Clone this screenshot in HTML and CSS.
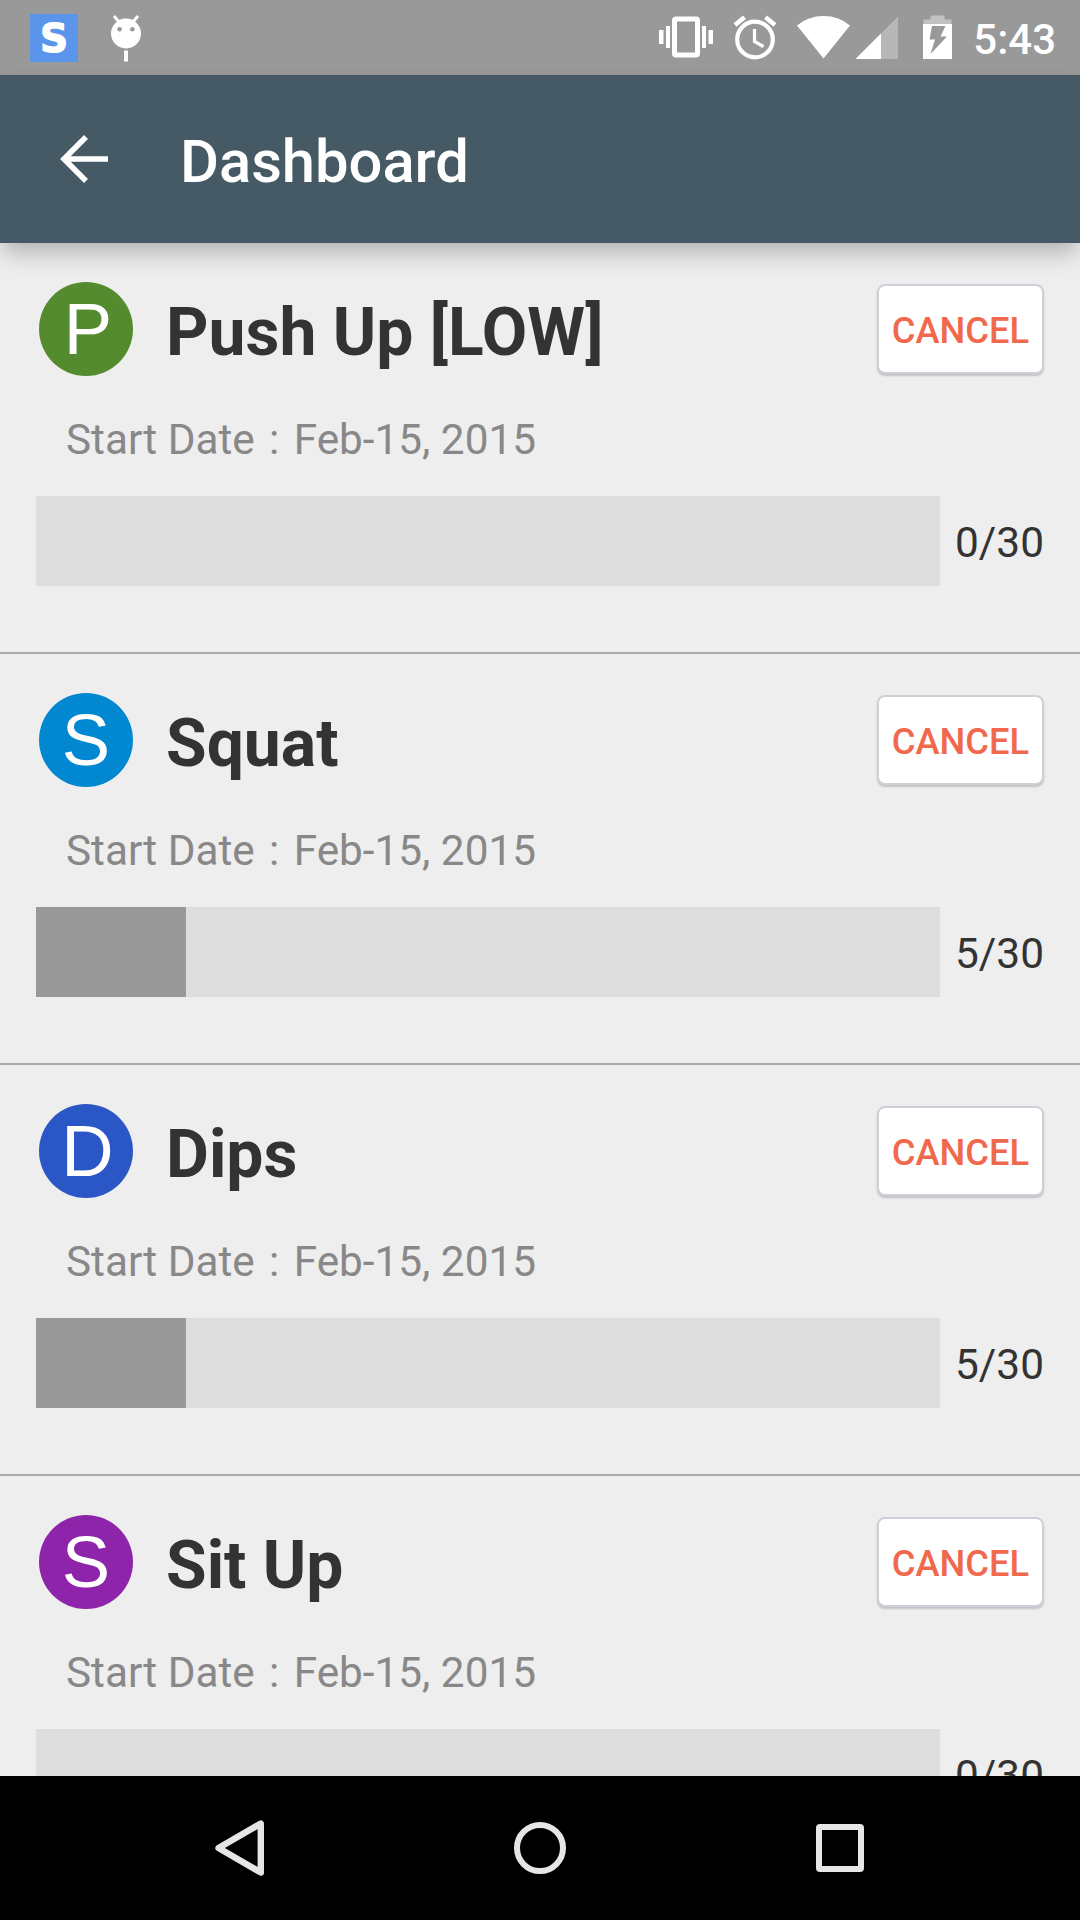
FILE: index.html
```html
<!DOCTYPE html>
<html lang="en">
<head>
<meta charset="utf-8">
<title>Dashboard</title>
<link rel="stylesheet" href="styles.css">
</head>
<body>
<div class="screen">
  <div class="status-bar">
    <div class="notifications">
      <span class="app-badge">S</span>
      <svg class="lollipop" width="32" height="48" viewBox="0 0 32 48" fill="#fff">
        <path d="M4 2l6 7M28 2l-6 7" stroke="#fff" stroke-width="3" fill="none"/>
        <circle cx="16" cy="19.500" r="15"/>
        <circle cx="9.600" cy="15.300" r="2.300" fill="#999"/>
        <circle cx="22.400" cy="15.300" r="2.300" fill="#999"/>
        <path d="M14 36.500h4v11h-4z"/>
      </svg>
    </div>
    <div class="indicators">
      <svg width="421" height="75" viewBox="659 0 421 75" fill="#fff" class="indicator-icons">
        <path d="M659 30h4.500v14H659zM666 26h4v22h-4zM702 26h4v22h-4zM708.500 30h4.500v14h-4.500z"/>
        <path fill-rule="evenodd" d="M676 16.500h20a4 4 0 0 1 4 4v33a4 4 0 0 1-4 4h-20a4 4 0 0 1-4-4v-33a4 4 0 0 1 4-4zM677 21.500v31h18v-31z"/>
        <g fill="none" stroke="#fff">
          <circle cx="755" cy="39.500" r="17.800" stroke-width="4.200"/>
          <path d="M754.500 29v12.500l9 5" stroke-width="3.200"/>
          <path d="M735 25l9.500-7.800M775 25l-9.500-7.800" stroke-width="4.600"/>
        </g>
        <path d="M797 25.500Q808 16 823.500 16T850 25.500L823.500 58.500z"/>
        <path d="M898 16.500V59h-42.500z" opacity=".3"/>
        <path d="M881 33.500V59h-25.500z"/>
        <path d="M930.500 15.500h14v4h7V24h-28v-4.500h7z" opacity=".4"/>
        <path fill-rule="evenodd" d="M923 24h29v35h-29zM932 26l-2.500 13.500h5.500l-4.500 14.500L947 36.500h-6.500l5-10.500z"/>
      </svg>
      <span class="clock">5:43</span>
    </div>
  </div>

  <header class="app-bar">
    <svg class="back" width="48" height="48" viewBox="0 0 48 48" fill="none" stroke="#fff" stroke-width="5.600">
      <path d="M48 24H5M26 2L4 24l22 22"/>
    </svg>
    <h1 class="app-title">Dashboard</h1>
  </header>

  <main class="list">
    <section class="workout">
      <div class="workout-head">
        <span class="avatar green">P</span>
        <h2 class="name">Push Up [LOW]</h2>
        <button class="cancel">CANCEL</button>
      </div>
      <div class="date"><span>Start Date</span><span class="colon">:</span><span>Feb-15, 2015</span></div>
      <div class="progress"><div class="track"></div><span class="count">0/30</span></div>
    </section>
    <section class="workout">
      <div class="workout-head">
        <span class="avatar sky">S</span>
        <h2 class="name">Squat</h2>
        <button class="cancel">CANCEL</button>
      </div>
      <div class="date"><span>Start Date</span><span class="colon">:</span><span>Feb-15, 2015</span></div>
      <div class="progress"><div class="track"><div class="fill" style="width:16.6%"></div></div><span class="count">5/30</span></div>
    </section>
    <section class="workout">
      <div class="workout-head">
        <span class="avatar blue">D</span>
        <h2 class="name">Dips</h2>
        <button class="cancel">CANCEL</button>
      </div>
      <div class="date"><span>Start Date</span><span class="colon">:</span><span>Feb-15, 2015</span></div>
      <div class="progress"><div class="track"><div class="fill" style="width:16.6%"></div></div><span class="count">5/30</span></div>
    </section>
    <section class="workout">
      <div class="workout-head">
        <span class="avatar purple">S</span>
        <h2 class="name">Sit Up</h2>
        <button class="cancel">CANCEL</button>
      </div>
      <div class="date"><span>Start Date</span><span class="colon">:</span><span>Feb-15, 2015</span></div>
      <div class="progress"><div class="track"></div><span class="count">0/30</span></div>
    </section>
  </main>

  <nav class="nav-bar">
    <svg width="300" height="144" viewBox="90 0 300 144"><path d="M260.800 47.500v49L218.500 72z" fill="none" stroke="#e6e6e6" stroke-width="6.400" stroke-linejoin="round"/></svg>
    <svg width="300" height="144" viewBox="390 0 300 144"><circle cx="540" cy="72" r="23" fill="none" stroke="#e6e6e6" stroke-width="6"/></svg>
    <svg width="300" height="144" viewBox="690 0 300 144"><path fill="#e6e6e6" fill-rule="evenodd" d="M820 48h40a4 4 0 0 1 4 4v40a4 4 0 0 1-4 4h-40a4 4 0 0 1-4-4V52a4 4 0 0 1 4-4zM822 54v36h36V54z"/></svg>
  </nav>
</div>
</body>
</html>
```
FILE: styles.css
```css
* { box-sizing: border-box; }
body {
  margin: 0;
  font-family: Roboto, "Liberation Sans", sans-serif;
  background: #eee;
}
h1, h2 { margin: 0; }
svg { display: block; flex: none; }

.screen {
  width: 1080px;
  height: 1920px;
  display: flex;
  flex-direction: column;
  overflow: hidden;
}

.status-bar {
  flex: none;
  height: 75px;
  display: flex;
  justify-content: space-between;
  background: #999;
  color: #fff;
}
.notifications {
  display: flex;
  gap: 32px;
  padding: 14px 0 0 30px;
}
.app-badge {
  width: 48px;
  height: 48px;
  background: #5a95eb;
  font: bold 39px/49px "DejaVu Sans", sans-serif;
  -webkit-text-stroke: 1.2px #fff;
  text-align: center;
}
.indicators { display: grid; }
.indicator-icons, .clock { grid-area: 1 / 1; }
.clock {
  justify-self: end;
  padding-right: 24px;
  font-size: 42px;
  font-weight: 500;
  line-height: 79px;
}

.app-bar {
  flex: none;
  height: 168px;
  display: flex;
  align-items: center;
  gap: 72px;
  padding-left: 60px;
  background: #455a64;
  color: #fff;
  position: relative;
  z-index: 1;
  box-shadow: 0 13px 22px -3px rgba(0, 0, 0, .25);
}
.app-title {
  padding-top: 5px;
  font-size: 59.7px;
  font-weight: 500;
}

.list {
  flex: 1;
  min-height: 0;
  overflow: hidden;
}
.workout {
  height: 411px;
  padding: 39px 36px 0;
  border-bottom: 2px solid #aaa;
}
.workout-head {
  display: flex;
  align-items: center;
  height: 94px;
  padding-left: 3px;
}
.avatar {
  width: 94px;
  height: 94px;
  border-radius: 50%;
  color: #fff;
  font-family: "Liberation Sans", Arial, sans-serif;
  font-size: 72.5px;
  line-height: 94px;
  text-align: center;
}
.green { background: #558b2f; padding-left: 4px; }
.sky { background: #0288d1; }
.blue { background: #2a56c6; padding-left: 3px; }
.purple { background: #8e24aa; }
.name {
  flex: 1;
  padding: 7px 0 0 33px;
  color: #333;
  font-size: 66px;
  font-weight: 700;
}
.cancel {
  width: 167px;
  height: 90px;
  padding: 5px 0 0;
  border: 2px solid #cdd0d8;
  border-radius: 8px;
  background: #fff;
  box-shadow: 0 2px 2px rgba(0, 0, 0, .18);
  color: #f0694d;
  font: 500 36.3px/1 Roboto, sans-serif;
}
.date {
  display: flex;
  margin-top: 39px;
  padding-left: 30px;
  color: #888;
  font-size: 42.3px;
  line-height: 50px;
}
.colon {
  width: 39px;
  text-align: center;
}
.progress {
  display: flex;
  justify-content: space-between;
  margin-top: 31px;
  height: 90px;
}
.track {
  width: 904px;
  background: #ddd;
}
.fill {
  height: 100%;
  background: #999;
}
.count {
  color: #333;
  font-size: 42.4px;
  line-height: 93px;
}

.nav-bar {
  flex: none;
  height: 144px;
  display: flex;
  justify-content: center;
  background: #000;
}
```
